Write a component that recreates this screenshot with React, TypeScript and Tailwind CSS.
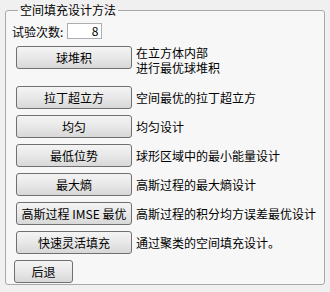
const font = { fontFamily: '"Noto Sans CJK SC", "Liberation Sans", sans-serif' };

const methods = [
  { label: '拉丁超立方', desc: '空间最优的拉丁超立方' },
  { label: '均匀', desc: '均匀设计' },
  { label: '最低位势', desc: '球形区域中的最小能量设计' },
  { label: '最大熵', desc: '高斯过程的最大熵设计' },
  { label: '高斯过程 IMSE 最优', desc: '高斯过程的积分均方误差最优设计' },
  { label: '快速灵活填充', desc: '通过聚类的空间填充设计。' },
];

const btn =
  'flex h-[23px] items-center justify-center whitespace-nowrap rounded-[3px] border border-[#707070] bg-gradient-to-b from-[#f4f4f4] via-[#e8e8e8] to-[#d8d8d8] text-[12px] leading-none text-black';

const App = () => {
  return (
    <div className="h-[292px] w-[330px] bg-[#f0f0f0] px-[5px] pt-[3px] text-[12px] text-black" style={font}>
      <fieldset className="h-[282px] rounded-[3px] border border-[#a8a8a8] bg-[#f7f7f7] pl-[6px]">
        <legend className="ml-[6px] px-[2px] text-[12px] leading-[14px]">空间填充设计方法</legend>

        <div className="mt-[6px] flex items-center">
          <span className="leading-[15px]">试验次数:</span>
          <div className="ml-[4px] flex h-[16px] w-[35px] items-center justify-end border border-[#abadb3] bg-white pr-[3px] leading-none">
            8
          </div>
        </div>

        <div className="mt-[7px] flex flex-col gap-[6px] pl-[4px]">
          <div className="flex h-[34px] items-start gap-[4px]">
            <button className={`${btn} w-[116px]`}>球堆积</button>
            <div className="flex flex-col gap-[1px]">
              <span className="leading-[14px]">在立方体内部</span>
              <span className="leading-[14px]">进行最优球堆积</span>
            </div>
          </div>

          {methods.map((m) => (
            <div key={m.label} className="flex items-center gap-[4px]">
              <button className={`${btn} w-[116px]`}>{m.label}</button>
              <span className="whitespace-nowrap">{m.desc}</span>
            </div>
          ))}

          <div className="-ml-[2px] flex">
            <button className={`${btn} w-[59px]`}>后退</button>
          </div>
        </div>
      </fieldset>
    </div>
  );
};

export default App;
